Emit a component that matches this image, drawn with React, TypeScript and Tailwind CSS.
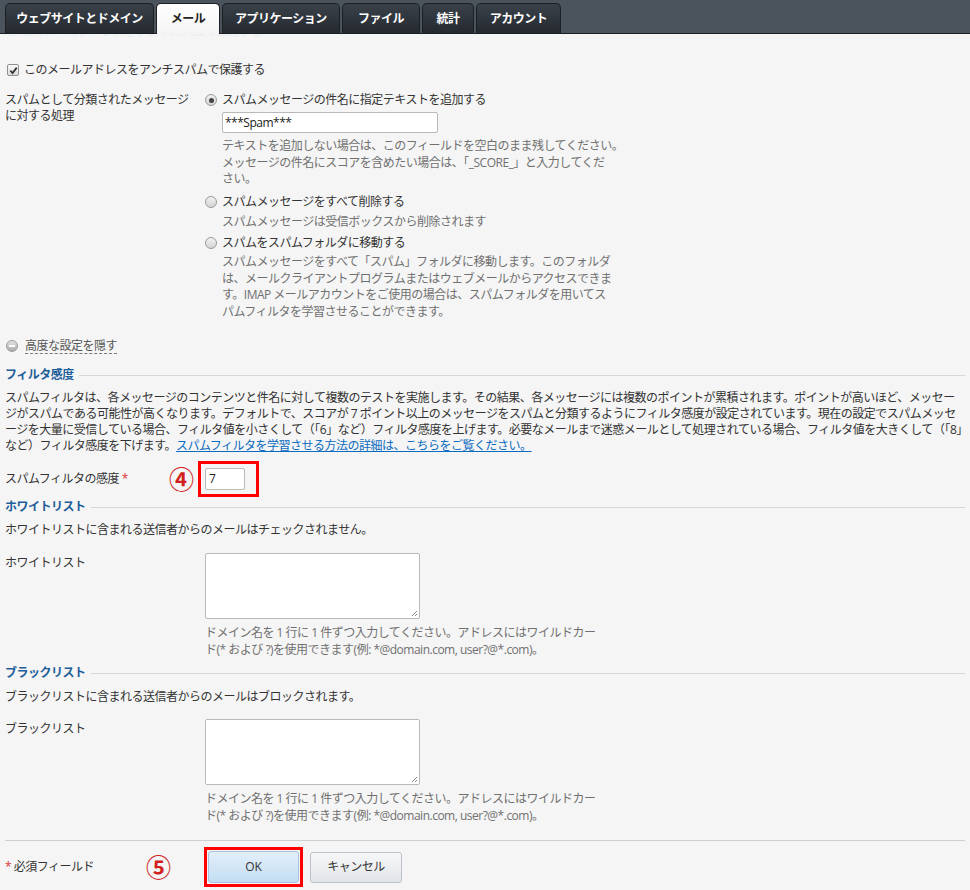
import React from "react";

const Radio = ({ checked }: { checked?: boolean }) => (
  <span className="inline-flex items-center justify-center w-[12px] h-[12px] rounded-full border border-[#9a9a9a] bg-gradient-to-b from-[#f2f2f2] to-[#d4d4d4] shrink-0">
    {checked && <span className="w-[5px] h-[5px] rounded-full bg-[#444]" />}
  </span>
);

const Heading = ({ children }: { children: React.ReactNode }) => (
  <div className="flex items-center gap-[5px] h-[16px]">
    <span className="font-bold text-[#1d5d9a] whitespace-nowrap">{children}</span>
    <span className="flex-1 h-px bg-[#d8d8d8]" />
  </div>
);

const Tab = ({ label, w, active }: { label: string; w: string; active?: boolean }) => (
  <div
    className={
      active
        ? `${w} h-[31px] rounded-t-[5px] border border-b-0 border-[#1c2024] bg-gradient-to-b from-[#ffffff] to-[#f4f4f4] text-[#222] font-bold flex items-center justify-center -mb-px relative`
        : `${w} h-[30px] rounded-t-[5px] border border-b-0 border-[#1c2024] bg-gradient-to-b from-[#3a4149] to-[#252a30] text-white font-bold flex items-center justify-center`
    }
  >
    {label}
  </div>
);

const Hint = ({ children, className = "" }: { children: React.ReactNode; className?: string }) => (
  <div className={`text-[#707070] leading-[16.5px] whitespace-nowrap ${className}`}>{children}</div>
);

const TextArea = () => (
  <div className="w-[215px] h-[66px] bg-white border border-[#b9b9b9] rounded-[2px] relative">
    <svg className="absolute right-[1px] bottom-[1px]" width="8" height="8" viewBox="0 0 8 8">
      <path d="M7 2 L2 7 M7 5 L5 7" stroke="#888" strokeWidth="1" />
    </svg>
  </div>
);

const DomainHint = () => (
  <Hint className="mt-[6px]">
    ドメイン名を 1 行に 1 件ずつ入力してください。アドレスにはワイルドカー
    <br />
    ド(* および ?)を使用できます(例: *@domain.com, user?@*.com)。
  </Hint>
);

export default function App() {
  return (
    <div className="w-[970px] h-[890px] overflow-hidden bg-[#f5f5f5] text-[#333] text-[12px] tracking-[-0.5px] font-['Open_Sans','Noto_Sans_CJK_JP',sans-serif]">
      {/* Tab bar */}
      <div className="h-[34px] bg-[#4b545d] border-b border-[#1c2024] flex items-end pl-[5px] gap-[2px]">
        <Tab label="ウェブサイトとドメイン" w="w-[149px]" />
        <Tab label="メール" w="w-[64px]" active />
        <Tab label="アプリケーション" w="w-[118px]" />
        <Tab label="ファイル" w="w-[78px]" />
        <Tab label="統計" w="w-[52px]" />
        <Tab label="アカウント" w="w-[85px]" />
      </div>

      <div className="px-[5px] leading-[16px]">
        {/* faint ghost row */}
        <div className="h-[10px] overflow-hidden text-[#ececec] pl-[2px] leading-[16px]">
          <div className="-mt-[10px]">□ このメールアドレスをアンチスパムで保護する</div>
        </div>

        {/* Checkbox */}
        <div className="mt-[18px] flex items-center gap-[5px] h-[16px] pl-[2px]">
          <span className="w-[12px] h-[12px] border border-[#8f8f8f] rounded-[2px] bg-gradient-to-b from-[#fafafa] to-[#dcdcdc] flex items-center justify-center">
            <svg width="9" height="9" viewBox="0 0 10 10">
              <path d="M1.5 5.2 L4 7.8 L8.6 1.8" fill="none" stroke="#333" strokeWidth="2" />
            </svg>
          </span>
          <span>このメールアドレスをアンチスパムで保護する</span>
        </div>

        {/* Spam handling */}
        <div className="mt-[14px] flex">
          <div className="w-[200px] shrink-0 pr-[6px]">スパムとして分類されたメッセージに対する処理</div>
          <div className="w-[420px]">
            <div className="flex items-center gap-[5px] h-[16px]">
              <Radio checked />
              <span>スパムメッセージの件名に指定テキストを追加する</span>
            </div>
            <div className="pl-[17px]">
              <div className="mt-[4px] w-[216px] h-[21px] bg-white border border-[#b9b9b9] rounded-[2px] px-[2px] flex items-center text-[#222]">
                ***Spam***
              </div>
              <Hint className="mt-[5px]">
                テキストを追加しない場合は、このフィールドを空白のまま残してください。
                <br />
                メッセージの件名にスコアを含めたい場合は、「_SCORE_」と入力してくだ
                <br />
                さい。
              </Hint>
            </div>
            <div className="mt-[6px] flex items-center gap-[5px] h-[16px]">
              <Radio />
              <span>スパムメッセージをすべて削除する</span>
            </div>
            <Hint className="pl-[17px] mt-[4px]">スパムメッセージは受信ボックスから削除されます</Hint>
            <div className="mt-[5px] flex items-center gap-[5px] h-[16px]">
              <Radio />
              <span>スパムをスパムフォルダに移動する</span>
            </div>
            <Hint className="pl-[17px] mt-[3px]">
              スパムメッセージをすべて「スパム」フォルダに移動します。このフォルダ
              <br />
              は、メールクライアントプログラムまたはウェブメールからアクセスできま
              <br />
              す。IMAP メールアカウントをご使用の場合は、スパムフォルダを用いてス
              <br />
              パムフィルタを学習させることができます。
            </Hint>
          </div>
        </div>

        {/* Advanced toggle */}
        <div className="mt-[18px] flex items-center gap-[7px] h-[16px] pl-[1px]">
          <span className="w-[12px] h-[12px] rounded-full bg-gradient-to-b from-[#e4e4e4] to-[#a9a9a9] border border-[#9d9d9d] flex items-center justify-center">
            <span className="w-[6px] h-[2px] bg-white" />
          </span>
          <span className="text-[#555] border-b border-dashed border-[#777] leading-[15px]">高度な設定を隠す</span>
        </div>

        {/* Filter sensitivity */}
        <div className="mt-[13px]">
          <Heading>フィルタ感度</Heading>
        </div>
        <div className="mt-[7px] leading-[16px]">
          スパムフィルタは、各メッセージのコンテンツと件名に対して複数のテストを実施します。その結果、各メッセージには複数のポイントが累積されます。ポイントが高いほど、メッセージがスパムである可能性が高くなります。デフォルトで、スコアが 7 ポイント以上のメッセージをスパムと分類するようにフィルタ感度が設定されています。現在の設定でスパムメッセージを大量に受信している場合、フィルタ値を小さくして（「6」など）フィルタ感度を上げます。必要なメールまで迷惑メールとして処理されている場合、フィルタ値を大きくして（「8」など）フィルタ感度を下げます。
          <span className="text-[#0b6bbf] underline">スパムフィルタを学習させる方法の詳細は、こちらをご覧ください。</span>
        </div>

        <div className="mt-[7px] flex items-center">
          <div className="w-[164px] shrink-0">
            スパムフィルタの感度 <span className="text-[#d33]">*</span>
          </div>
          <div className="w-[29px] text-[#d21f1f] font-bold text-[25px] leading-[20px] tracking-normal">④</div>
          <div className="border-[3px] border-[#ff0000] py-[4px] pl-[4px] pr-[11px]">
            <div className="w-[40px] h-[22px] bg-white border border-[#b9b9b9] rounded-[2px] px-[3px] flex items-center text-[#222]">7</div>
          </div>
        </div>

        {/* Whitelist */}
        <div className="mt-[2px]">
          <Heading>ホワイトリスト</Heading>
        </div>
        <div className="mt-[7px]">ホワイトリストに含まれる送信者からのメールはチェックされません。</div>
        <div className="mt-[15px] flex">
          <div className="w-[200px] shrink-0 pt-[2px]">ホワイトリスト</div>
          <div>
            <TextArea />
            <DomainHint />
          </div>
        </div>

        {/* Blacklist */}
        <div className="mt-[7px]">
          <Heading>ブラックリスト</Heading>
        </div>
        <div className="mt-[8px]">ブラックリストに含まれる送信者からのメールはブロックされます。</div>
        <div className="mt-[14px] flex">
          <div className="w-[200px] shrink-0 pt-[2px]">ブラックリスト</div>
          <div>
            <TextArea />
            <DomainHint />
          </div>
        </div>

        {/* Footer */}
        <div className="mt-[16px] h-px bg-[#cfcfcf]" />
        <div className="mt-[6px] flex items-center">
          <div className="w-[141px] shrink-0">
            <span className="text-[#d33]">*</span> 必須フィールド
          </div>
          <div className="w-[58px] text-[#d21f1f] font-bold text-[25px] leading-[20px] tracking-normal">⑤</div>
          <div className="border-[3px] border-[#ff0000] p-[1px]">
            <div className="w-[91px] h-[32px] rounded-[3px] border border-[#a6c3dd] bg-gradient-to-b from-[#e3effa] to-[#c3ddf3] flex items-center justify-center text-[#333] tracking-normal">OK</div>
          </div>
          <div className="ml-[7px] w-[92px] h-[31px] rounded-[3px] border border-[#bcc2c7] bg-gradient-to-b from-[#f6f7f8] to-[#e2e5e8] flex items-center justify-center text-[#333]">キャンセル</div>
        </div>
      </div>
    </div>
  );
}
